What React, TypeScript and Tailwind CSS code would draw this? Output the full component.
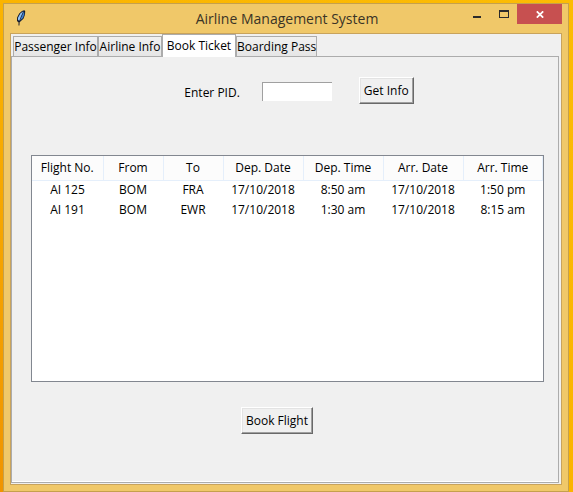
import React, { useState } from "react";

type Flight = {
  no: string;
  from: string;
  to: string;
  depDate: string;
  depTime: string;
  arrDate: string;
  arrTime: string;
};

const tabs = [
  { label: "Passenger Info", width: "w-[85px]" },
  { label: "Airline Info", width: "w-[64px]" },
  { label: "Book Ticket", width: "w-[74px]" },
  { label: "Boarding Pass", width: "w-[81px]" },
];

const columns = [
  { label: "Flight No.", width: "w-[71px]" },
  { label: "From", width: "w-[60px]" },
  { label: "To", width: "w-[60px]" },
  { label: "Dep. Date", width: "w-[80px]" },
  { label: "Dep. Time", width: "w-[80px]" },
  { label: "Arr. Date", width: "w-[80px]" },
  { label: "Arr. Time", width: "w-auto" },
];

const flights: Flight[] = [
  { no: "AI 125", from: "BOM", to: "FRA", depDate: "17/10/2018", depTime: "8:50 am", arrDate: "17/10/2018", arrTime: "1:50 pm" },
  { no: "AI 191", from: "BOM", to: "EWR", depDate: "17/10/2018", depTime: "1:30 am", arrDate: "17/10/2018", arrTime: "8:15 am" },
];

function Feather() {
  return (
    <svg viewBox="0 0 10 16" className="h-4 w-[10px]" aria-hidden="true">
      <path d="M8.2 .3 9.2 1 9 4.5 7.6 8.5 5 11 3.6 12.2 3.4 15.4 2.5 15.4 2.6 12.5 1 11 1.1 7.5 3.2 3.5 6 1Z" fill="#10182c" />
      <path d="M8 1.2 8.3 4.2 7 8 4 10.6 5.6 6.4Z" fill="#3f7cc8" />
      <path d="M7.3 1.3 4.3 3.4 2 7.7 2 10 3.3 10.8 5 6.2Z" fill="#8fc1f6" />
    </svg>
  );
}

function TitleBar() {
  return (
    <header className="flex h-[29px] items-start pr-[6px] pl-[12px]">
      <div className="flex flex-1 basis-0 pt-[6px]">
        <Feather />
      </div>
      <h1 className="pt-[4px] pr-1 text-[14px] leading-[22px] whitespace-nowrap text-[#3a3426]">
        Airline Management System
      </h1>
      <div className="flex flex-1 basis-0 justify-end">
        <button aria-label="Minimize" className="flex h-5 w-[27px] items-center justify-center">
          <svg viewBox="0 0 8 10" className="h-[10px] w-2">
            <path d="M0 7h8v2H0z" fill="#2b2b2b" />
          </svg>
        </button>
        <button aria-label="Maximize" className="flex h-5 w-[27px] items-center justify-center">
          <svg viewBox="0 0 10 8" className="h-2 w-[10px]">
            <path d="M0 0h10v8H0zM1 2v5h8V2z" fill="#2b2b2b" fillRule="evenodd" />
          </svg>
        </button>
        <button aria-label="Close" className="flex h-5 w-[45px] items-center justify-center bg-[#c75050]">
          <svg viewBox="0 0 8 7" className="h-[7px] w-2">
            <path d="M.8 .3 7.2 6.7M7.2 .3 .8 6.7" stroke="#fff" strokeWidth="1.7" />
          </svg>
        </button>
      </div>
    </header>
  );
}

function RaisedButton({ children }: { children: React.ReactNode }) {
  return (
    <button className="h-[27px] border border-t-white border-r-[#696969] border-b-[#696969] border-l-white bg-[#f0f0f0] px-1 whitespace-nowrap shadow-[inset_-1px_-1px_0_#a0a0a0,inset_1px_1px_0_#e3e3e3]">
      {children}
    </button>
  );
}

export default function App() {
  const [active, setActive] = useState("Book Ticket");
  const [pid, setPid] = useState("");

  return (
    <div className="flex min-h-screen bg-linear-to-tr from-[#f09400] via-[#fbb400] to-[#fcbc04] pt-[3px] pr-1 pl-[3px] font-['Open_Sans','Noto_Sans',sans-serif] text-[12px] leading-4 text-black">
      <div className="flex min-w-0 flex-1 flex-col border border-[#c5a04c] bg-[#f0c869]">
        <TitleBar />
        <main className="mx-[6px] mb-[6px] flex flex-1 flex-col border border-[#c8a35c] bg-[#f0f0f0] pr-[2px] pb-px">
          <div role="tablist" className="flex h-[22px] items-end pl-[2px]">
            {tabs.map(({ label, width }) => (
              <button
                key={label}
                role="tab"
                aria-selected={label === active}
                onClick={() => setActive(label)}
                className={`${width} border border-b-0 border-[#acacac] text-center whitespace-nowrap ${
                  label === active
                    ? "z-10 -mb-px h-[23px] bg-white pb-px"
                    : "h-5 bg-linear-to-b from-[#f0f0f0] to-[#e6e6e6] pt-px"
                }`}
              >
                {label}
              </button>
            ))}
          </div>
          <section role="tabpanel" className="flex flex-1 flex-col border border-[#acacac] px-[19px] shadow-[inset_0_-1px_0_#ffffff]">
            <form className="flex items-center justify-center pt-5 pl-7" onSubmit={(e) => e.preventDefault()}>
              <label htmlFor="pid" className="mr-[22px] pt-[5px]">
                Enter PID.
              </label>
              <input
                id="pid"
                value={pid}
                onChange={(e) => setPid(e.target.value)}
                className="mt-px mr-[27px] h-[19px] w-[70px] border-t border-l border-[#a0a0a0] bg-white px-1 outline-none"
              />
              <RaisedButton>Get Info</RaisedButton>
            </form>
            <div className="mt-[51px] mr-[-5px] h-[227px] border border-[#828790] bg-white">
              <table className="w-full table-fixed border-collapse text-center">
                <thead>
                  <tr className="h-6 bg-[#fcfcfc]">
                    {columns.map((c) => (
                      <th key={c.label} className={`${c.width} border-r border-b border-[#e5effb] p-0 font-normal`}>
                        {c.label}
                      </th>
                    ))}
                  </tr>
                </thead>
                <tbody>
                  {flights.map((f) => (
                    <tr key={f.no} className="h-5">
                      {Object.values(f).map((value, i) => (
                        <td key={i} className="p-0">
                          {value}
                        </td>
                      ))}
                    </tr>
                  ))}
                </tbody>
              </table>
            </div>
            <div className="flex justify-center pt-[25px] pr-[16px]">
              <RaisedButton>Book Flight</RaisedButton>
            </div>
          </section>
        </main>
      </div>
    </div>
  );
}
